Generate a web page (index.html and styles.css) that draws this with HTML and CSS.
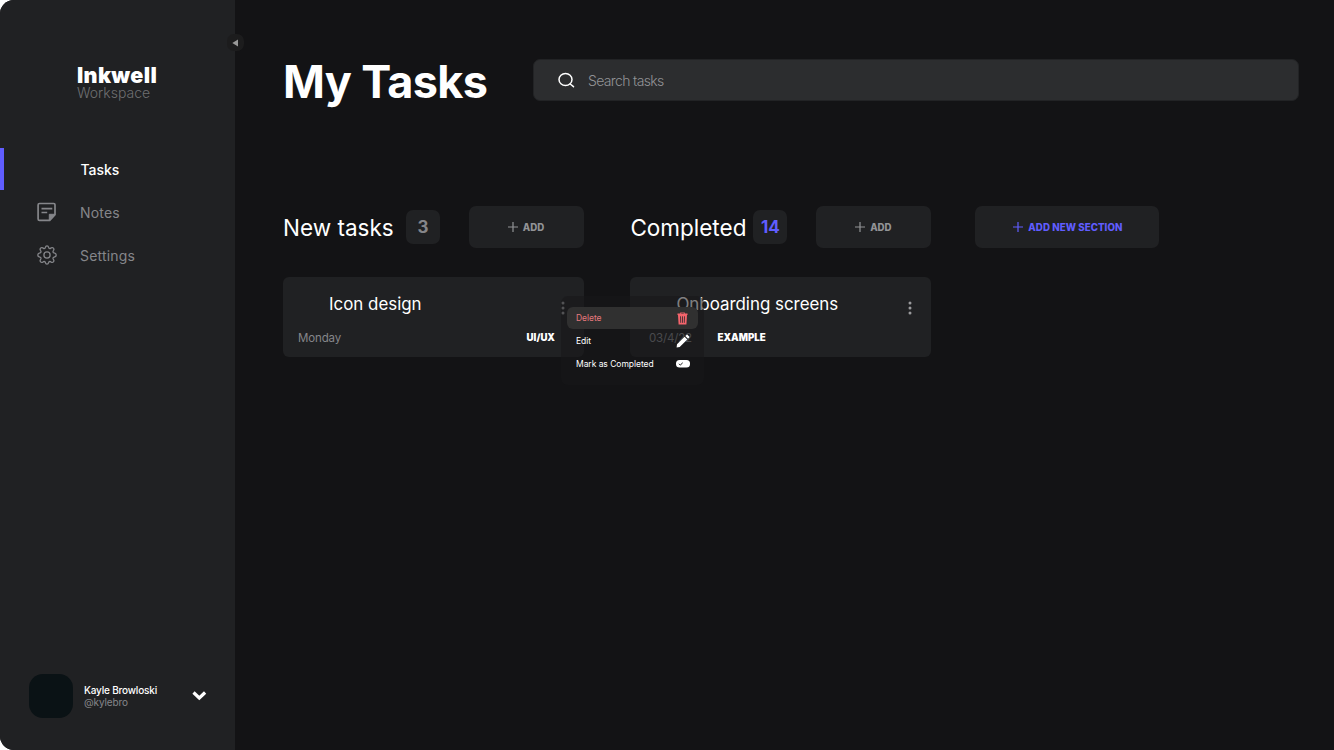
FILE: index.html
```html
<!DOCTYPE html>
<html lang="en">
<head>
<meta charset="utf-8">
<title>Inkwell Workspace</title>
<link rel="stylesheet" href="styles.css">
</head>
<body>
<div class="app">
  <aside class="sidebar">
    <button class="collapse" aria-label="Collapse"><svg width="6" height="8" viewBox="0 0 6 8"><path d="M6 .5v7L.3 4z" fill="#999"/></svg></button>
    <div class="brand"><div class="brand-name">Inkwell</div><div class="brand-sub">Workspace</div></div>
    <nav class="nav">
      <a class="nav-item active"><span class="nav-icon"></span><span class="nav-label">Tasks</span></a>
      <a class="nav-item"><span class="nav-icon"><svg width="20" height="20" viewBox="0 0 20 20" fill="none" stroke="#85868a" stroke-width="1.7"><path d="M2.500 1.500h14.200q1.300 0 1.300 1.300v9.800l-5.300 5.700H2.500q-1.400 0-1.400-1.400V2.900q0-1.400 1.400-1.400z" stroke-linejoin="round"/><path d="M18 12.300h-5.700v6z" fill="#85868a" stroke-width="1"/><path d="M4.500 6.700h10.800M4.500 10.500h5.700"/></svg></span><span class="nav-label">Notes</span></a>
      <a class="nav-item"><span class="nav-icon"><svg width="20" height="20" viewBox="0 0 20 20" fill="none" stroke="#85868a" stroke-width="1.300" stroke-linejoin="round"><path d="M8.400 2.400Q8.700.8 10 .8t1.600 1.600q.4 1.600 2 .9l.6-.4q1.300-.7 2.200.2t.2 2.200l-.4.7q-.6 1.400.9 1.900l.7.2q1.400.4 1.400 1.900t-1.400 1.900l-.7.2q-1.500.5-.9 1.900l.4.7q.7 1.300-.2 2.200t-2.200.2l-.6-.4q-1.600-.7-2 .9-.3 1.600-1.600 1.600t-1.600-1.600q-.4-1.600-2-.9l-.6.4q-1.300.7-2.200-.2t-.2-2.200l.4-.7q.6-1.400-.9-1.900l-.7-.2Q.8 11.500.8 10t1.400-1.900l.7-.2q1.500-.5.9-1.900l-.4-.7q-.7-1.300.2-2.200t2.200-.2l.6.4q1.600.7 2-.9z"/><circle cx="10" cy="10" r="3.100"/></svg></span><span class="nav-label">Settings</span></a>
    </nav>
    <div class="profile">
      <div class="avatar"></div>
      <div class="who"><div class="who-name">Kayle Browloski</div><div class="who-handle">@kylebro</div></div>
      <svg class="chevron" width="16" height="12" viewBox="0 0 16 12" fill="none" stroke="#fff" stroke-width="3.200"><path d="M2.500 2.500L8.300 8l5.800-5.500"/></svg>
    </div>
  </aside>
  <main class="main">
    <header class="top">
      <h1 class="title">My Tasks</h1>
      <div class="search"><svg width="18" height="18" viewBox="0 0 18 18" fill="none" stroke="#fff" stroke-width="1.500"><ellipse cx="8.500" cy="8.500" rx="6.500" ry="6"/><path d="M13.200 13l3.300 2.700" stroke-linecap="round"/></svg><span class="placeholder">Search tasks</span></div>
    </header>
    <div class="board">
      <section class="column">
        <div class="column-head"><h2 class="column-title">New tasks</h2><span class="count">3</span>
          <button class="add"><svg width="10" height="10" viewBox="0 0 10 10" stroke="currentColor" stroke-width="1.200"><path d="M5 0v10M0 5h10"/></svg><span class="add-label">ADD</span></button></div>
        <article class="card">
          <div class="card-top"><h3 class="card-title">Icon design</h3><svg class="dots" width="4" height="14" viewBox="0 0 4 14" fill="#999a9c"><circle cx="2" cy="2" r="1.500"/><circle cx="2" cy="7" r="1.500"/><circle cx="2" cy="12" r="1.500"/></svg></div>
          <div class="card-foot"><span class="date">Monday</span><span class="tag">UI/UX</span></div>
        </article>
      </section>
      <section class="column">
        <div class="column-head"><h2 class="column-title">Completed</h2><span class="count accent">14</span>
          <button class="add"><svg width="10" height="10" viewBox="0 0 10 10" stroke="currentColor" stroke-width="1.200"><path d="M5 0v10M0 5h10"/></svg><span class="add-label">ADD</span></button></div>
        <article class="card">
          <div class="card-top"><h3 class="card-title">Onboarding screens</h3><svg class="dots" width="4" height="14" viewBox="0 0 4 14" fill="#999a9c"><circle cx="2" cy="2" r="1.500"/><circle cx="2" cy="7" r="1.500"/><circle cx="2" cy="12" r="1.500"/></svg></div>
          <div class="card-foot second"><span class="date">03/4/22</span><span class="tag">EXAMPLE</span></div>
        </article>
      </section>
      <button class="add section-add"><svg width="10" height="10" viewBox="0 0 10 10" stroke="currentColor" stroke-width="1.200"><path d="M5 0v10M0 5h10"/></svg><span class="add-label">ADD NEW SECTION</span></button>
    </div>
  </main>
  <div class="menu">
    <div class="menu-item delete"><span class="menu-label">Delete</span><svg width="11" height="13" viewBox="0 0 11 13"><path d="M3.200 1.500V.4h4.600v1.100h2.700V3H.5V1.500z" fill="#f4646c"/><path d="M1 3h9l-.6 9.500H1.600z" fill="#f4646c"/><path d="M3.500 4.300l.2 6.500M5.500 4.300v6.500M7.500 4.300l-.2 6.500" fill="none" stroke="#403032" stroke-width=".9"/><path d="M4.200 1.400h2.600" stroke="#303030" stroke-width=".6"/></svg></div>
    <div class="menu-item"><span class="menu-label">Edit</span><svg width="14" height="14" viewBox="0 0 14 14" fill="#fff"><path d="M1 10.200L8.600 2.700l2.700 2.700L3.700 13 .6 13.500zM9.300 2l1.200-1.100q.6-.6 1.200 0l1.500 1.500q.5.600 0 1.100L12 4.700z"/></svg></div>
    <div class="menu-item"><span class="menu-label">Mark as Completed</span><svg width="14" height="8" viewBox="0 0 14 8"><rect width="14" height="7.600" rx="3.500" fill="#fff"/><path d="M3 3.800l1.300 1.300L6.700 2.800" fill="none" stroke="#171719"/></svg></div>
  </div>
</div>
</body>
</html>
```
FILE: styles.css
```css
* { box-sizing: border-box; }
body { margin: 0; background: #fff; font-family: Inter, "Liberation Sans", sans-serif; color: #fff; }
h1, h2, h3 { margin: 0; font-weight: 400; }
button { border: 0; font: inherit; padding: 0; }
svg { display: block; flex: none; }
.app { position: relative; display: flex; width: 1334px; height: 750px; overflow: hidden; background: #131315; border-radius: 14px 0 0 14px; }
.sidebar { position: relative; display: flex; flex-direction: column; width: 235px; flex: none; background: #202123; }
.collapse { position: absolute; top: 34px; right: -9px; width: 17px; height: 17px; border-radius: 7px; background: #1c1c1d; display: grid; place-items: center; }
.collapse svg { margin-right: 1px; }
.brand { padding: 65px 0 0 77px; height: 148px; }
.brand-name { font-size: 21.500px; line-height: 20px; font-weight: 900; letter-spacing: .35px; }
.brand-sub { font-size: 14px; line-height: 16px; color: #6e6f71; font-weight: 300; letter-spacing: 0; }
.nav { display: flex; flex-direction: column; gap: 2px; }
.nav-item { display: flex; align-items: center; height: 41px; padding-left: 37px; font-size: 14px; color: #85868a; letter-spacing: .2px; }
.nav-item.active { border-left: 4px solid #605dff; padding-left: 33.500px; color: #fff; height: 42px; margin-bottom: -1px; font-weight: 500; letter-spacing: -.05px; }
.nav-icon { width: 20px; margin: 1px 23px 0 0; }
.nav-label { padding-top: 2px; }
.active .nav-label { padding-top: 1px; }
.profile { display: flex; align-items: center; margin: auto 0 32px 29px; }
.avatar { width: 44px; height: 44px; border-radius: 14px; background: #0a1215; }
.who { width: 119px; margin-left: 11px; font-size: 10px; line-height: 12px; letter-spacing: -.1px; }
.who-name { font-weight: 500; letter-spacing: -.18px; }
.who-handle { color: #85868a; }
.chevron { margin-left: -12px; }
.main { flex: 1; padding: 59px 35px 0 48px; }
.top { display: flex; height: 147px; align-items: flex-start; }
.title { width: 250px; font-size: 45px; line-height: 46px; font-weight: 700; white-space: nowrap; letter-spacing: -.65px; }
.search { flex: 1; height: 42px; margin-top: .4px; display: flex; align-items: center; gap: 13px; padding-left: 23px; background: #2c2d2f; border: 1px solid #222325; border-radius: 7px; }
.placeholder { color: #929396; font-size: 14px; font-weight: 300; letter-spacing: -.65px; }
.board { display: flex; align-items: flex-start; }
.column { width: 301px; margin-right: 46.400px; }
.column-head { display: flex; align-items: center; height: 42px; }
.column-title { width: 123px; font-size: 22.500px; line-height: 28px; padding-top: 1px; white-space: nowrap; }
.count { width: 34px; height: 34px; border-radius: 7px; background: #202123; color: #85868a; font-size: 17px; line-height: 35px; font-weight: 700; text-align: center; }
.count.accent { color: #605dff; }
.add { display: flex; align-items: center; justify-content: center; gap: 5px; width: 115px; height: 42px; margin-left: auto; border-radius: 7px; background: #202123; color: #929396; font-size: 9.700px; font-weight: 800; }
.add svg { margin-left: -1px; }
.section-add { width: 184px; margin-left: -2.400px; color: #605dff; }
.section-add .add-label { letter-spacing: .08px; }
.section-add svg { margin-left: 1px; }
.card { height: 80px; margin-top: 29px; background: #202123; border-radius: 6px; }
.card-top { display: flex; justify-content: space-between; height: 51px; padding: 15px 19px 0 46px; }
.card-title { font-size: 16.900px; line-height: 24px; white-space: nowrap; }
.dots { margin-top: 9px; }
.card-foot { display: flex; justify-content: space-between; padding: 0 29px 0 15px; line-height: 19px; }
.card-foot.second { justify-content: flex-start; gap: 25.500px; padding-left: 18.500px; }
.date { font-size: 11.500px; line-height: 21px; color: #85868a; letter-spacing: -.15px; }
.tag { font-size: 9.700px; font-weight: 900; }
.menu { position: absolute; left: 561px; top: 296px; width: 143px; height: 89px; padding: 11px 6px 0; border-radius: 7px; background: rgba(24, 24, 26, .55); }
.menu-item { display: flex; align-items: center; justify-content: space-between; height: 23px; padding: 0 8px 0 9px; font-size: 8.500px; letter-spacing: -.04px; }
.menu-item.delete { height: 22px; padding-right: 10px; border-radius: 6px; background: #303030; color: #e5797d; }
```
